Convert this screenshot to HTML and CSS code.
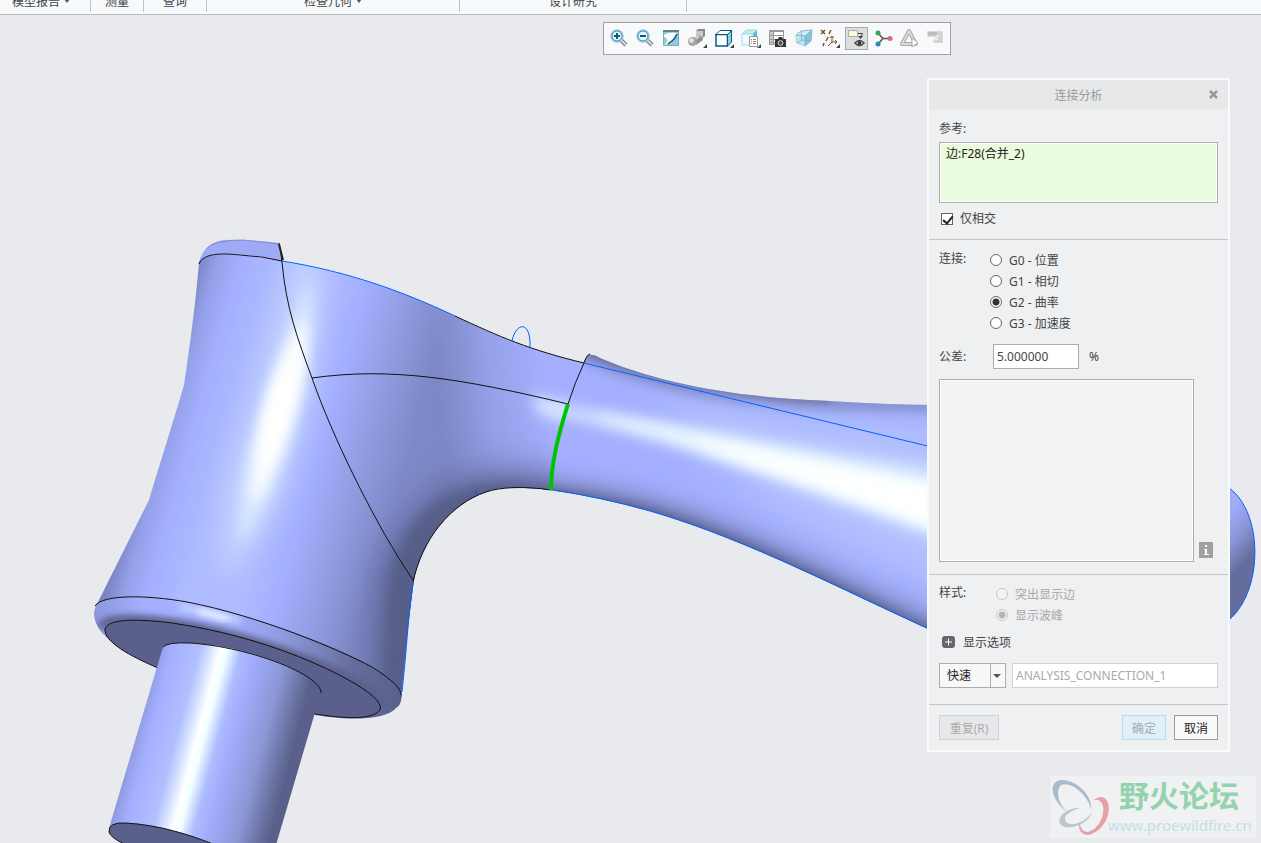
FILE: index.html
```html
<!DOCTYPE html>
<html lang="zh-CN">
<head>
  <meta charset="UTF-8">
  <meta name="viewport" content="width=device-width, initial-scale=1.0">
  <title>连接分析</title>
  <link rel="stylesheet" href="styles.css">
</head>
<body>
  <nav class="ribbon">
    <button class="group g-report">模型报告 <i class="caret"></i></button>
    <button class="group g-measure">测量</button>
    <button class="group g-query">查询</button>
    <button class="group g-geometry">检查几何 <i class="caret"></i></button>
    <button class="group g-study">设计研究</button>
  </nav>

  <main class="viewport">
    <svg class="model" viewBox="0 15 1261 828" preserveAspectRatio="xMinYMin slice" aria-hidden="true">
      <defs>
        <linearGradient id="barrel" gradientUnits="userSpaceOnUse" x1="246" y1="68" x2="525" y2="146">
          <stop offset="0.02" stop-color="#7a84c4"/>
          <stop offset="0.08" stop-color="#939fe6"/>
          <stop offset="0.16" stop-color="#a3afff"/>
          <stop offset="0.3" stop-color="#aebcff"/>
          <stop offset="0.48" stop-color="#aebbff"/>
          <stop offset="0.6" stop-color="#a3afff"/>
          <stop offset="0.74" stop-color="#929de2"/>
          <stop offset="0.9" stop-color="#7f8ac8"/>
          <stop offset="1" stop-color="#7e89c7"/>
        </linearGradient>
        <linearGradient id="neck" gradientUnits="userSpaceOnUse" x1="440" y1="410" x2="548" y2="400">
          <stop offset="0" stop-color="#a4b0ff" stop-opacity="0"/>
          <stop offset="0.5" stop-color="#a4b0ff" stop-opacity="0.6"/>
          <stop offset="1" stop-color="#a4b0ff"/>
        </linearGradient>
        <linearGradient id="shaft" gradientUnits="userSpaceOnUse" x1="137" y1="728" x2="300" y2="771">
          <stop offset="0" stop-color="#8f9be0"/>
          <stop offset="0.08" stop-color="#a3afff"/>
          <stop offset="0.24" stop-color="#b1bfff"/>
          <stop offset="0.3" stop-color="#d3e0ff"/>
          <stop offset="0.36" stop-color="#ffffff"/>
          <stop offset="0.4" stop-color="#f0ffff"/>
          <stop offset="0.48" stop-color="#aebcff"/>
          <stop offset="0.56" stop-color="#a1adfc"/>
          <stop offset="0.74" stop-color="#8c97d6"/>
          <stop offset="0.88" stop-color="#666e9b"/>
          <stop offset="0.93" stop-color="#5a608b"/>
        </linearGradient>
        <linearGradient id="rim" gradientUnits="userSpaceOnUse" x1="94" y1="0" x2="402" y2="0">
          <stop offset="0" stop-color="#8b96dc"/>
          <stop offset="0.15" stop-color="#a3afff"/>
          <stop offset="0.4" stop-color="#a6b3ff"/>
          <stop offset="0.6" stop-color="#929de3"/>
          <stop offset="0.85" stop-color="#646c9a"/>
          <stop offset="1" stop-color="#5a608b"/>
        </linearGradient>
        <linearGradient id="knob" gradientUnits="userSpaceOnUse" x1="1222" y1="520" x2="1256" y2="550">
          <stop offset="0" stop-color="#a0acfa"/>
          <stop offset="0.5" stop-color="#8a95d6"/>
          <stop offset="1" stop-color="#656d9d"/>
        </linearGradient>
        <filter id="soft3" x="-20%" y="-40%" width="140%" height="180%"><feGaussianBlur stdDeviation="3"/></filter>
        <filter id="soft7" x="-60%" y="-60%" width="220%" height="220%"><feGaussianBlur stdDeviation="7"/></filter>
        <filter id="soft12" x="-60%" y="-60%" width="220%" height="220%"><feGaussianBlur stdDeviation="12"/></filter>
        <filter id="soft18" x="-100%" y="-100%" width="300%" height="300%"><feGaussianBlur stdDeviation="18"/></filter>
        <clipPath id="bodyClip">
          <path d="M199 262 C203 255 220 254 238 255 C252 256 267 258 281 261 C345 271 400 290 455 316 C500 338 530 350 583 363 C577 374 572 392 568 404 C560 430 551 462 551 490 C535 488 510 486 492 490 C450 502 422 540 414 580 C408 620 405 660 401 695 C390 668 300 632 228 612 C165 596 112 593 96 606 L149 500 C158 470 172 426 184 385 C190 345 196 300 199 262Z"/>
        </clipPath>
        <clipPath id="armClip">
          <path d="M588 355 Q594 354 600 358 C660 384 740 398 830 401 Q890 405 940 405 L940 634 C850 594 750 540 650 511 Q600 497 550 490 C551 460 560 430 568 404 C572 388 578 368 588 355Z"/>
        </clipPath>
        <clipPath id="rimClip">
          <path d="M96 604 C112 592 165 596 228 612 C320 636 396 672 402 695 Q401 706 396 708 C384 722 340 720 310 714 L160 668 C125 653 94 636 94 613Z"/>
        </clipPath>
      </defs>

      <!-- handle end -->
      <path d="M1229 488 C1263 512 1264 590 1229 620Z" fill="url(#knob)" stroke="#0062ff"/>

      <!-- cap above the barrel -->
      <path d="M199 262 C203 248 212 241 225 240 Q245 239 279 243 L283 262 C250 252 215 252 199 262Z" fill="#9eaaf6"/>
      <path d="M206 249 Q214 240 243 240 L279 244" fill="none" stroke="#838dca"/>

      <!-- barrel and neck -->
      <g clip-path="url(#bodyClip)">
        <rect x="90" y="235" width="500" height="470" fill="url(#barrel)"/>
        <path d="M420 280 H600 V510 H420Z" fill="url(#neck)"/>
        <path d="M452 312 Q430 350 432 450" fill="none" stroke="#7782bb" stroke-width="18" opacity="0.35" filter="url(#soft18)"/>
        <path d="M620 516 C540 500 500 500 470 512 C436 530 412 565 406 600 L396 720" fill="none" stroke="#555c86" stroke-width="70" opacity="0.55" filter="url(#soft18)"/>
        <path d="M620 512 C530 490 492 490 468 502 C430 520 408 560 404 590 L394 720" fill="none" stroke="#555c86" stroke-width="30" opacity="0.6" filter="url(#soft12)"/>
        <path d="M620 510 C530 492 492 490 470 500 C432 517 410 560 406 590 L398 720" fill="none" stroke="#555c86" stroke-width="16" filter="url(#soft7)"/>
        <path d="M460 504 C425 520 402 555 399 600 L396 720" fill="none" stroke="#575e88" stroke-width="22" filter="url(#soft7)"/>
        <path d="M320 235 C330 340 305 430 285 490 Q265 540 222 585 Q214 510 242 430 Q270 340 300 235Z" fill="#c6d5ff" opacity="0.8" filter="url(#soft12)"/>
        <path d="M312 275 C314 350 299 410 284 455 Q264 515 240 545 Q236 490 256 430 Q276 355 312 275Z" fill="#d8e8ff" filter="url(#soft7)"/>
        <path d="M306 315 C308 355 299 400 286 436 Q270 485 253 505 Q250 470 261 430 Q276 360 306 315Z" fill="#ffffff" filter="url(#soft7)"/>
        <path d="M301 340 Q298 385 284 424 Q272 460 263 462 Q260 430 274 390Z" fill="#ffffff" filter="url(#soft7)"/>
        <path d="M530 395 L610 412 L610 436 L540 414Z" fill="#dae9ff" filter="url(#soft7)"/>
      </g>

      <!-- arm -->
      <g clip-path="url(#armClip)">
        <rect x="540" y="345" width="400" height="295" fill="#a4b0ff"/>
        <path d="M650 400 L1000 440 L1000 610 L780 510Z" fill="#b4c2ff" filter="url(#soft18)"/>
        <path d="M560 342 C650 386 740 398 830 402 L980 404" fill="none" stroke="#7882bb" stroke-width="12" filter="url(#soft7)"/>
        <path d="M570 345 C640 376 730 394 830 399" fill="none" stroke="#687097" stroke-width="7" filter="url(#soft3)"/>
        <path d="M510 496 Q600 506 650 520 C750 549 850 603 980 664" fill="none" stroke="#6b74a8" stroke-width="44" opacity="0.7" filter="url(#soft12)"/>
        <path d="M510 490 Q600 501 650 515 C750 544 850 598 980 659" fill="none" stroke="#5c638f" stroke-width="14" filter="url(#soft7)"/>
        <path d="M510 488 Q600 500 650 514 C750 543 850 597 980 658" fill="none" stroke="#555c86" stroke-width="5" filter="url(#soft3)"/>
        <path d="M520 398 C640 418 760 440 1000 478 L1000 562 C830 502 740 464 640 436 Q590 422 520 408Z" fill="#d4e3ff" filter="url(#soft7)"/>
        <path d="M600 415 C740 443 830 462 1000 496 L1000 552 C850 498 760 462 600 419Z" fill="#f2ffff" filter="url(#soft7)"/>
        <path d="M700 443 Q850 470 1000 502 L1000 548 Q850 496 700 447Z" fill="#ffffff" filter="url(#soft7)"/>
      </g>

      <!-- rounded rim and underside -->
      <g clip-path="url(#rimClip)">
        <rect x="90" y="590" width="320" height="135" fill="url(#rim)"/>
        <path d="M100 628 C108 611 180 621 235 636 C310 657 375 684 384 708" fill="none" stroke="#5a608b" stroke-width="9" filter="url(#soft3)"/>
        <path d="M180 607 Q210 612 240 621" fill="none" stroke="#d8e6ff" stroke-width="4" filter="url(#soft3)"/>
        <path d="M198 611 L228 619" stroke="#ffffff" stroke-width="4" filter="url(#soft3)"/>
      </g>
      <path d="M105 629 C108 618 140 619 172 623 C240 633 300 654 345 678 Q384 699 380 710 C372 721 340 718 315 714 L158 668 C130 656 104 642 105 629Z" fill="#5a608b" stroke="#111"/>

      <!-- shaft -->
      <path d="M163 647 Q167 642 190 643 C250 646 312 672 321 690 L314 716 L276 845 L140 850 L109 828Z" fill="url(#shaft)"/>
      <path d="M314 675 L321 690 L313 716Z" fill="#5a608b"/>
      <path d="M109 832 Q108 822 126 823 C160 825 190 835 213 844 L124 844 Q110 837 109 832Z" fill="#5a608b" stroke="#111"/>

      <g class="edge">
        <path d="M199 264 C203 253 222 253 240 255 Q262 256 282 261"/>
        <path d="M279 243 Q281 252 282 262 C286 308 298 340 312 378 C332 436 376 526 413 580"/>
        <path d="M312 378 C390 367 460 378 568 404"/>
        <path d="M455 316 C500 337 530 350 584 363"/>
        <path d="M590 354 Q587 354 584 363 Q575 382 568 404"/>
        <path d="M551 490 C525 486 500 487 486 492 C450 504 422 540 413 582"/>
        <path d="M95 606 C103 594 148 595 187 602 C260 616 340 650 372 667 Q402 686 401 695"/>
        <path d="M163 647 Q167 642 190 643 C250 647 322 675 321 693"/>
      </g>
      <path d="M279 244 L283 260" stroke="#222" stroke-width="2"/>
      <g class="trace">
        <path d="M282 261 C345 271 400 290 455 316"/>
        <path d="M512 341 C516 322 531 320 530 347"/>
        <path d="M584 363 L940 449"/>
        <path d="M553 490 Q600 497 650 511 C750 540 850 594 940 634"/>
        <path d="M413 582 Q408 620 405 662 L402 692"/>
        <path d="M476 490 V495"/>
      </g>
      <path d="M568 404 C559 432 551 463 551 490" fill="none" stroke="#00c400" stroke-width="4"/>
    </svg>

    <div class="toolbar" role="toolbar">
      <button title="放大"><svg viewBox="0 0 23 23"><path d="M14 13 L19 18" stroke="#777" stroke-width="4"/><path d="M14 13 L19 18" stroke="#ddd" stroke-width="2"/><circle cx="10" cy="9" r="6" fill="#e8f7fc" stroke="#9cc8da" stroke-width="1.500"/><circle cx="10" cy="9" r="5" fill="none" stroke="#3b8bad"/><path d="M7 9 H13 M10 6 V12" stroke="#075a82" stroke-width="2"/></svg></button>
      <button title="缩小"><svg viewBox="0 0 23 23"><path d="M14 13 L19 18" stroke="#777" stroke-width="4"/><path d="M14 13 L19 18" stroke="#ddd" stroke-width="2"/><circle cx="10" cy="9" r="6" fill="#e8f7fc" stroke="#9cc8da" stroke-width="1.500"/><circle cx="10" cy="9" r="5" fill="none" stroke="#3b8bad"/><path d="M7 9 H13" stroke="#075a82" stroke-width="2"/></svg></button>
      <button title="重画"><svg viewBox="0 0 23 23"><path d="M3.500 4.500 H18.500 V18.500 H3.500Z" fill="#8fcbe0" stroke="#8aa7b3"/><path d="M3 4 H19" stroke="#5e8193" stroke-width="2"/><path d="M4 8 Q8 5 17 6 L10 16 L5 18 Q10 11 4 10Z" fill="#fff"/><path d="M17 7 Q15 12 12 14 T8 17" fill="none" stroke="#075a82" stroke-width="1.500"/></svg></button>
      <button title="显示样式"><svg viewBox="0 0 23 23"><path d="M10 4 L12 2 H19 V9 L17 11 H10Z" fill="#8a8a8a"/><path d="M10 4 H17 V11 H10Z" fill="#c9c9c9"/><path d="M8 11 L12 8 Q17 9 17 13 L10 18Z" fill="#8f8f8f"/><path d="M8 11 L12 8 L14 10 L9 14Z" fill="#d0d0d0"/><circle cx="6.500" cy="14.500" r="4.500" fill="#a2a2a2"/><circle cx="5.500" cy="13.500" r="2.500" fill="#ddd"/><path d="M21 17 V21 H17Z" fill="#444"/></svg></button>
      <button title="视图"><svg viewBox="0 0 23 23"><path d="M3 7.500 H14.500 V19 H3Z" fill="#fff" stroke="#075a82" stroke-width="1.500"/><path d="M3 7.500 L7 3.500 H18.500 L14.500 7.500Z" fill="#fff" stroke="#075a82"/><path d="M18.500 3.500 V15 L14.500 19 V7.500Z" fill="#8ecde2" stroke="#075a82"/><path d="M21 17 V21 H17Z" fill="#444"/></svg></button>
      <button title="视图管理器"><svg viewBox="0 0 23 23"><path d="M3 7 L7 3 H18 L14 7Z" fill="#c5e9f4" stroke="#a3d8e8"/><path d="M14 7 L18 3 V14 L14 18Z" fill="#5cb9d6"/><path d="M3 7 H14 V18 H3Z" fill="#f2fafd" stroke="#a3d8e8"/><path d="M10.500 9.500 H18.500 V19.500 H10.500Z" fill="#fff" stroke="#999"/><path d="M12 12.500 H13 M14 12.500 H17 M12 14.500 H13 M14 14.500 H17 M12 16.500 H13 M14 16.500 H17" stroke="#888"/><path d="M22 17 V21 H18Z" fill="#444"/></svg></button>
      <button title="保存视图"><svg viewBox="0 0 23 23"><path d="M4.500 3.500 H18.500 V17.500 H4.500Z" fill="#fff" stroke="#999"/><path d="M4 4.500 H19 M4 8.500 H19 M4 12.500 H13 M4 15.500 H11 M8.500 4 V18" stroke="#999"/><path d="M4 4 H8 V18 H4Z" fill="#999" opacity="0.500"/><path d="M10 12 H13 L14 10 H17 L18 12 H21 V20 H10Z" fill="#333"/><circle cx="15.500" cy="16" r="2.500" fill="#555" stroke="#ccc"/></svg></button>
      <button title="透视图"><svg viewBox="0 0 23 23"><path d="M4 8 L9 4 L20 3 L19 14 L13 19 L5 16Z" fill="#d3edf6" stroke="#7fb9cd"/><path d="M13 9 L20 3 L19 14 L13 19Z" fill="#84c0d6"/><path d="M4 8 L13 9 L13 19 L5 16Z" fill="#c0e4f0"/><path d="M4 8 L13 9 L20 3 M13 9 V19 M9 4 L10 13 L5 16 M10 13 L19 14" fill="none" stroke="#7fb9cd"/></svg></button>
      <button title="基准显示"><svg viewBox="0 0 23 23"><path d="M3 3 L7 7 M7 3 L3 7 M13 3 L11 7 M10 10 L8 14 M6 16 L5 19" stroke="#79591d" stroke-width="1.500"/><path d="M14 9 V15 H19 M14 15 L10 19 M12 11 L14 9 L16 11 M17 13 L19 15 L17 17" fill="none" stroke="#79591d"/><path d="M22 17 V21 H18Z" fill="#444"/></svg></button>
      <button class="pressed" title="注释显示"><svg viewBox="0 0 23 23"><path d="M3.500 3.500 H12.500 V9.500 H3.500Z" fill="#fff9df" stroke="#aaa"/><path d="M13 6.500 H17.500 L15.500 11" fill="none" stroke="#444"/><path d="M13 9 H18 L15.500 12Z" fill="#444"/><path d="M10 16 Q14.500 11 19 16 Q14.500 21 10 16Z" fill="#fff" stroke="#444" stroke-width="1.500"/><circle cx="14.500" cy="16" r="2" fill="#333"/></svg></button>
      <button title="旋转中心"><svg viewBox="0 0 23 23"><path d="M7 6 L12 11.500 H19 M12 11.500 L7 17" fill="none" stroke="#555" stroke-width="1.500"/><circle cx="7" cy="6" r="2.500" fill="#3aa457"/><circle cx="19" cy="11.500" r="2.500" fill="#dc6a78"/><circle cx="7" cy="17" r="2.500" fill="#3188ae"/></svg></button>
      <button title="模拟" disabled><svg viewBox="0 0 23 23"><path d="M5 17 L12 4 L19 17Z" fill="none" stroke="#aaa" stroke-width="4" stroke-linejoin="round"/><path d="M5 17 L12 4 L19 17Z" fill="none" stroke="#d8d9da" stroke-width="2" stroke-linejoin="round"/><path d="M15 11 L21 15.500 L15 20Z" fill="#fff" stroke="#aaa"/></svg></button>
      <button title="几何" disabled><svg viewBox="0 0 23 23"><path d="M3.500 4.500 H18.500 V15.500 H9.500 V13.500 Q13 13 12 9.500 H3.500Z" fill="#cfd1d2" stroke="#d8d9da"/><path d="M4 5 H13 V8 H4Z" fill="#babcbd"/><path d="M12 8 H15 Q16 13 11 14 Q13 12 12 8Z" fill="#e6e7e8"/></svg></button>
    </div>

    <form class="dialog">
      <header class="title">
        <span>连接分析</span>
        <button type="button" class="close" aria-label="关闭"><svg viewBox="0 0 9 9"><path d="M1 1 L8 8 M8 1 L1 8" stroke="#979797" stroke-width="2.500"/></svg></button>
      </header>

      <section class="refs">
        <label for="ref">参考:</label>
        <textarea id="ref" class="collector" readonly>边:F28(合并_2)</textarea>
        <label class="option intersect"><input type="checkbox" checked>仅相交</label>
      </section>

      <section class="connection">
        <div class="choices" role="radiogroup" aria-labelledby="conn">
          <span id="conn" class="name">连接:</span>
          <div class="radios">
            <label class="option"><input type="radio" name="conn">G0 - 位置</label>
            <label class="option"><input type="radio" name="conn">G1 - 相切</label>
            <label class="option"><input type="radio" name="conn" checked>G2 - 曲率</label>
            <label class="option"><input type="radio" name="conn">G3 - 加速度</label>
          </div>
        </div>
        <div class="tolerance">
          <label for="tol" class="name">公差:</label>
          <input id="tol" class="field" type="text" value="5.000000">
          <span>%</span>
        </div>
        <div class="result">
          <output class="report"></output>
          <button type="button" class="info" aria-label="信息"><svg viewBox="0 0 14 16"><path d="M6 3 H8 V5 H6Z M5 7 H8 V12 H10 V13 H5 V12 H6 V8 H5Z" fill="#fff"/></svg></button>
        </div>
      </section>

      <section class="style">
        <div class="choices" role="radiogroup" aria-labelledby="style">
          <span id="style" class="name">样式:</span>
          <div class="radios indent">
            <label class="option off"><input type="radio" name="style" disabled>突出显示边</label>
            <label class="option off"><input type="radio" name="style" checked disabled>显示波峰</label>
          </div>
        </div>
        <button type="button" class="expand"><svg viewBox="0 0 13 12"><rect width="13" height="12" rx="3" fill="#66666e"/><path d="M3 6 H10 M6.500 2.500 V9.500" stroke="#fff"/></svg>显示选项</button>
        <div class="save">
          <div class="picker">
            <select aria-label="分析类型"><option>快速</option></select>
            <i class="caret"></i>
          </div>
          <input class="field" type="text" value="ANALYSIS_CONNECTION_1" aria-label="名称" disabled>
        </div>
      </section>

      <footer class="actions">
        <button type="button" class="repeat" disabled>重复(R)</button>
        <button type="button" class="ok" disabled>确定</button>
        <button type="button">取消</button>
      </footer>
    </form>

    <div class="watermark">
      <svg viewBox="0 0 60 62" aria-hidden="true">
        <path d="M41 33 C43 20 26 3 11 4 C-3 6 1 25 20 38 C8 29 5 16 11 9 C22 5 38 20 41 33Z" fill="#a9bbcb"/>
        <path d="M42 25 Q54 16 58 27 C62 41 50 58 37 59 Q28 58 29 46 Q31 56 38 56 C48 54 55 40 53 30 Q50 21 42 25Z" fill="#e5a1a5"/>
        <path d="M30 32 C17 31 5 42 11 49 C18 55 38 49 42 36 C35 47 21 51 16 46 Q11 38 30 32Z" fill="#b8c6d2"/>
      </svg>
      <div class="forum">
        <strong>野火论坛</strong>
        <span>www.proewildfire.cn</span>
      </div>
    </div>
  </main>
</body>
</html>
```

FILE: styles.css
```css
* {
  box-sizing: border-box;
}
body {
  margin: 0;
  height: 100vh;
  display: flex;
  flex-direction: column;
  overflow: hidden;
  background-color: #e8eaed;
  color: #444;
  font-family: "Noto Sans", "Noto Sans CJK SC", sans-serif;
  font-size: 12px;
}
button, input, select, textarea {
  font: inherit;
  color: inherit;
}
button {
  padding: 0;
  border: none;
  background: none;
}
svg {
  display: block;
}

/* ribbon */
.ribbon {
  display: flex;
  align-items: flex-end;
  height: 15px;
  overflow: hidden;
  flex-shrink: 0;
  background-color: #f7f9fb;
  border-bottom: 1px solid #b0bcc2;
}
.group {
  display: flex;
  justify-content: center;
  align-items: center;
  gap: 4px;
  height: 22px;
  margin-bottom: 2px;
  border-right: 1px solid #bfc3c6;
}
.g-report {
  width: 91px;
  padding-right: 8px;
}
.g-measure {
  width: 53px;
}
.g-query {
  width: 63px;
}
.g-geometry {
  width: 253px;
}
.g-study {
  width: 227px;
}
.caret {
  border: 3px solid transparent;
  border-top: 4px solid #555;
  border-bottom: 0;
}

/* graphics area */
.viewport {
  position: relative;
  flex: 1;
  min-height: 0;
}
.model {
  width: 100%;
  height: 100%;
}
.edge path {
  fill: none;
  stroke: #111;
}
.trace path {
  fill: none;
  stroke: #0062ff;
}

/* floating toolbar */
.toolbar {
  position: absolute;
  top: 7px;
  right: 310px;
  width: 348px;
  height: 33px;
  padding: 0 3px;
  display: flex;
  justify-content: space-between;
  align-items: center;
  background-color: #f7f9fb;
  border: 1px solid #9fa2a5;
}
.toolbar button {
  width: 23px;
  height: 23px;
}
.toolbar .pressed {
  background-color: #dcdee0;
  box-shadow: 0 0 0 1px #a9acae inset;
}

/* dialog */
.dialog {
  position: absolute;
  top: 63px;
  right: 31px;
  width: 303px;
  background-color: #eef0f2;
  border: 2px solid #f9fafb;
}
.title {
  position: relative;
  height: 30px;
  line-height: 32px;
  text-align: center;
  color: #9b9b9b;
  background-color: #e6e8ea;
}
.close {
  position: absolute;
  top: 10px;
  right: 10px;
  width: 9px;
  height: 9px;
}
.dialog section {
  padding: 8px 10px;
  border-bottom: 1px solid #c3c6c8;
}
.dialog .refs {
  display: flex;
  flex-direction: column;
  line-height: 20px;
  padding-top: 9px;
  padding-bottom: 10px;
}
.collector {
  width: 100%;
  height: 61px;
  margin: 3px 0 6px;
  padding: 1px 6px;
  resize: none;
  color: #222;
  background-color: #eafcdd;
  border: 1px solid #abadaf;
  box-shadow: 0 0 0 1px #fff inset;
  outline: none;
}
.option {
  display: flex;
  align-items: center;
  gap: 7px;
  height: 21px;
}
.intersect {
  height: 20px;
  padding-left: 2px;
}
.option input {
  appearance: none;
  position: relative;
  width: 12px;
  height: 12px;
  margin: 0;
  background-color: #fff;
  border: 1px solid #666;
}
.option input[type="radio"] {
  border-radius: 50%;
}
.option input[type="radio"]:checked {
  background-image: radial-gradient(circle, #333 3px, #fff 4px);
}
.option input[type="checkbox"]:checked::after {
  content: "";
  position: absolute;
  left: 3px;
  top: 0;
  width: 4px;
  height: 8px;
  border: solid #222;
  border-width: 0 2px 2px 0;
  transform: rotate(40deg);
}
.off {
  color: #aaa;
}
.option input:disabled {
  background-color: #f3f4f5;
  border-color: #c6c6c6;
}
.option input[type="radio"]:disabled:checked {
  background-image: radial-gradient(circle, #b5b5b5 3px, #f3f4f5 4px);
}
.dialog .connection {
  padding-top: 9px;
  padding-bottom: 12px;
}
.choices {
  display: flex;
}
.name {
  width: 51px;
  line-height: 20px;
}
.indent {
  padding-left: 6px;
}
.field {
  min-width: 0;
  height: 25px;
  padding: 0 3px;
  background-color: #fff;
  border: 1px solid #abadaf;
}
.field:disabled {
  color: #aaa;
  border-color: #cfd2d4;
}
.tolerance {
  display: flex;
  align-items: center;
  margin: 11px 0 10px;
}
.tolerance .field {
  width: 86px;
  margin: 0 10px 0 3px;
}
.result {
  display: flex;
  align-items: flex-end;
  gap: 5px;
}
.report {
  flex: 1;
  height: 183px;
  background-color: #f3f3f3;
  border: 1px solid #abadaf;
  box-shadow: 0 0 0 1px #fff inset;
}
.info {
  width: 14px;
  height: 16px;
  margin: 0 5px 4px 0;
  background-color: #a0a0a0;
}
.dialog .style {
  padding-top: 8px;
  padding-bottom: 16px;
}
.expand {
  display: flex;
  align-items: center;
  gap: 8px;
  height: 20px;
  margin: 7px 0 11px 3px;
}
.expand svg {
  width: 13px;
  height: 12px;
}
.save {
  display: flex;
  gap: 6px;
}
.save .field {
  flex: 1;
}
.picker {
  position: relative;
  width: 67px;
}
.picker select {
  appearance: none;
  width: 100%;
  height: 25px;
  padding: 0 7px;
  color: #222;
  border: 1px solid #abadaf;
  border-radius: 0;
  background: linear-gradient(#abadaf, #abadaf) 50px 0 / 1px 100% no-repeat #f7f8f8;
}
.picker .caret {
  position: absolute;
  top: 11px;
  right: 5px;
  border-width: 4px 4px 0;
}
.actions {
  display: flex;
  gap: 8px;
  padding: 10px;
}
.actions button {
  width: 44px;
  height: 25px;
  color: #222;
  background-color: #f8f9f9;
  border: 1px solid #999;
}
.actions .repeat {
  width: 60px;
  margin-right: auto;
  color: #aaa;
  background-color: #e6e8ea;
  border-color: #cfd2d4;
}
.actions .ok {
  color: #a0abb0;
  background-color: #e0eff8;
  border-color: #b0dff3;
}

/* watermark */
.watermark {
  position: absolute;
  right: 5px;
  bottom: 5px;
  width: 206px;
  height: 62px;
  display: flex;
  background-color: #eff1f3;
}
.watermark svg {
  width: 60px;
  flex-shrink: 0;
}
.forum {
  display: flex;
  flex-direction: column;
}
.forum strong {
  padding-left: 9px;
  font-size: 30px;
  line-height: 40px;
  color: #95d3ae;
}
.forum span {
  margin-left: -2px;
  font-size: 15px;
  line-height: 18px;
  color: #c5dfe2;
}
```
